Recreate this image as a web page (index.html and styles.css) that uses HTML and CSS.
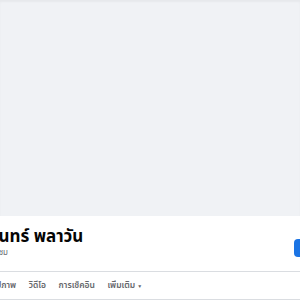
FILE: index.html
```html
<!DOCTYPE html>
<html lang="th">
<head>
    <meta charset="UTF-8">
    <meta name="viewport" content="width=device-width, initial-scale=1.0">
    <title>ศรีจันทร์ พลาวัน</title>
    <link rel="stylesheet" href="styles.css">
</head>
<body>
    <div class="cover"></div>
    <div class="profile">
        <div class="head">
            <div class="names">
                <h1 class="name">ศรีจันทร์ พลาวัน</h1>
                <div class="friends">ชื่นชม</div>
            </div>
            <button class="add-button">เพิ่มเป็นเพื่อน</button>
        </div>
        <div class="tabs">
            <a class="tab">เพื่อน</a>
            <a class="tab">รูปภาพ</a>
            <a class="tab">วิดีโอ</a>
            <a class="tab">การเช็คอิน</a>
            <a class="tab">เพิ่มเติม <span class="caret">▼</span></a>
        </div>
    </div>
</body>
</html>
```

FILE: styles.css
```css
body {
    margin: 0;
    padding: 0;
    background: #f0f2f5;
    font-family: "Noto Sans Thai", "Noto Sans", sans-serif;
    overflow: hidden;
}
.cover {
    height: 216px;
    background: #f0f2f5;
    box-shadow: inset 0 2px 2px rgba(0, 0, 0, 0.04);
}
.profile {
    background: white;
    height: 84px;
}
.head {
    display: flex;
    align-items: flex-start;
    justify-content: space-between;
    height: 55px;
    border-bottom: 1px solid #dadde1;
}
.names {
    margin-left: -31px;
    padding-top: 10px;
}
.name {
    margin: 0;
    font-size: 17px;
    font-weight: 700;
    color: #050505;
    line-height: 22px;
    white-space: nowrap;
}
.friends {
    width: 39px;
    font-size: 8px;
    color: #65676b;
    line-height: 10px;
    text-align: right;
    white-space: nowrap;
}
.add-button {
    width: 60px;
    height: 18px;
    margin-top: 23px;
    margin-right: -54px;
    border: none;
    border-radius: 4px;
    background: #1b74e4;
    color: white;
    font-size: 8px;
}
.tabs {
    display: flex;
    align-items: center;
    gap: 12.5px;
    height: 27px;
    margin-left: -40px;
    border-bottom: 1px solid #dadde1;
}
.tab {
    font-size: 8.5px;
    font-weight: 600;
    color: #65676b;
    white-space: nowrap;
}
.caret {
    font-size: 5px;
}
```
